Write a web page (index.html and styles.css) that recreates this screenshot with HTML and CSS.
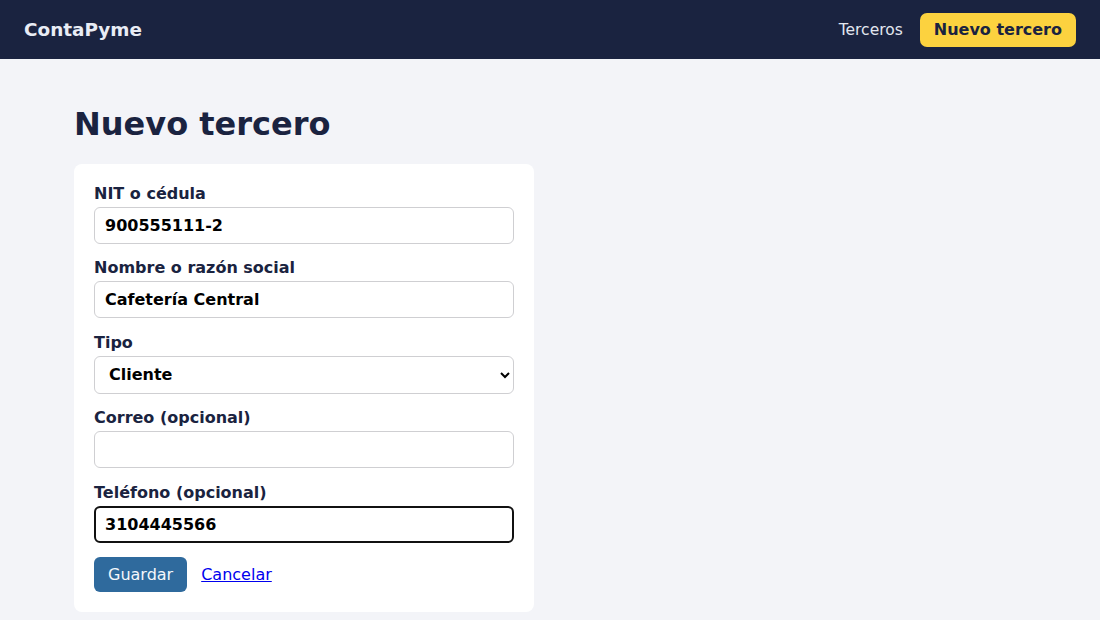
FILE: index.html
```html
<!DOCTYPE html>
<html lang="es">
<head>
<meta charset="utf-8">
<title>Nuevo tercero - ContaPyme</title>
<link rel="stylesheet" href="styles.css">
</head>
<body>
<header class="topbar">
  <a class="brand" href="#">ContaPyme</a>
  <nav class="nav">
    <a class="nav-link" href="#">Terceros</a>
    <a class="nav-cta" href="#">Nuevo tercero</a>
  </nav>
</header>
<main class="page">
  <h1 class="title">Nuevo tercero</h1>
  <form class="card">
    <label class="field">
      <span class="field-label">NIT o cédula</span>
      <input class="control" type="text" value="900555111-2">
    </label>
    <label class="field">
      <span class="field-label">Nombre o razón social</span>
      <input class="control" type="text" value="Cafetería Central">
    </label>
    <label class="field">
      <span class="field-label">Tipo</span>
      <select class="control select">
        <option selected>Cliente</option>
        <option>Proveedor</option>
        <option>Empleado</option>
      </select>
    </label>
    <label class="field">
      <span class="field-label">Correo (opcional)</span>
      <input class="control" type="email" value="">
    </label>
    <label class="field">
      <span class="field-label">Teléfono (opcional)</span>
      <input class="control focused" type="text" value="3104445566">
    </label>
    <div class="actions">
      <button class="btn-primary" type="button">Guardar</button>
      <a class="cancel" href="#">Cancelar</a>
    </div>
  </form>
</main>
</body>
</html>
```

FILE: styles.css
```css
html, body {
  margin: 0;
  padding: 0;
}

body {
  background: #f3f4f8;
  font-family: "DejaVu Sans", sans-serif;
  color: #1a2340;
}

.topbar {
  height: 59px;
  background: #1a2340;
  display: flex;
  align-items: center;
  justify-content: space-between;
  padding: 0 24px;
  box-sizing: border-box;
}

.brand {
  color: #e8ecf5;
  font-weight: bold;
  font-size: 18.4px;
  text-decoration: none;
}

.nav {
  display: flex;
  align-items: center;
  gap: 17px;
}

.nav-link {
  color: #e2e6ef;
  font-size: 15.5px;
  text-decoration: none;
}

.nav-cta {
  background: #fcd23f;
  color: #1a2340;
  font-weight: bold;
  font-size: 16px;
  line-height: 20px;
  padding: 7px 14px;
  border-radius: 7px;
  text-decoration: none;
}

.page {
  padding: 25px 74px 0;
}

.title {
  font-size: 32px;
  font-weight: bold;
  margin: 21px 0 21px;
  color: #1a2340;
}

.card {
  width: 460px;
  box-sizing: border-box;
  background: #ffffff;
  border-radius: 8px;
  padding: 20px;
  display: flex;
  flex-direction: column;
  gap: 14.4px;
}

.field {
  display: flex;
  flex-direction: column;
  gap: 4px;
}

.field-label {
  font-size: 16px;
  font-weight: bold;
  color: #1a2340;
}

.control {
  font-family: inherit;
  font-size: 16px;
  font-weight: bold;
  color: #000;
  padding: 8px 10px;
  border: 1px solid #cfcfd2;
  border-radius: 6px;
  background: #fff;
  outline: none;
  margin: 0;
}

.select {
  height: 38px;
  padding: 0 8px 0 10px;
}

.focused {
  border: 2px solid #111;
  padding: 7px 9px;
}

.actions {
  display: flex;
  align-items: center;
  gap: 14px;
}

.btn-primary {
  font-family: inherit;
  font-size: 16px;
  color: #f4f7fb;
  background: #2f6a9d;
  border: none;
  border-radius: 6px;
  padding: 8px 14px;
  line-height: 19px;
  cursor: pointer;
}

.cancel {
  font-size: 16px;
  color: #0000ee;
  text-decoration: underline;
}
```
